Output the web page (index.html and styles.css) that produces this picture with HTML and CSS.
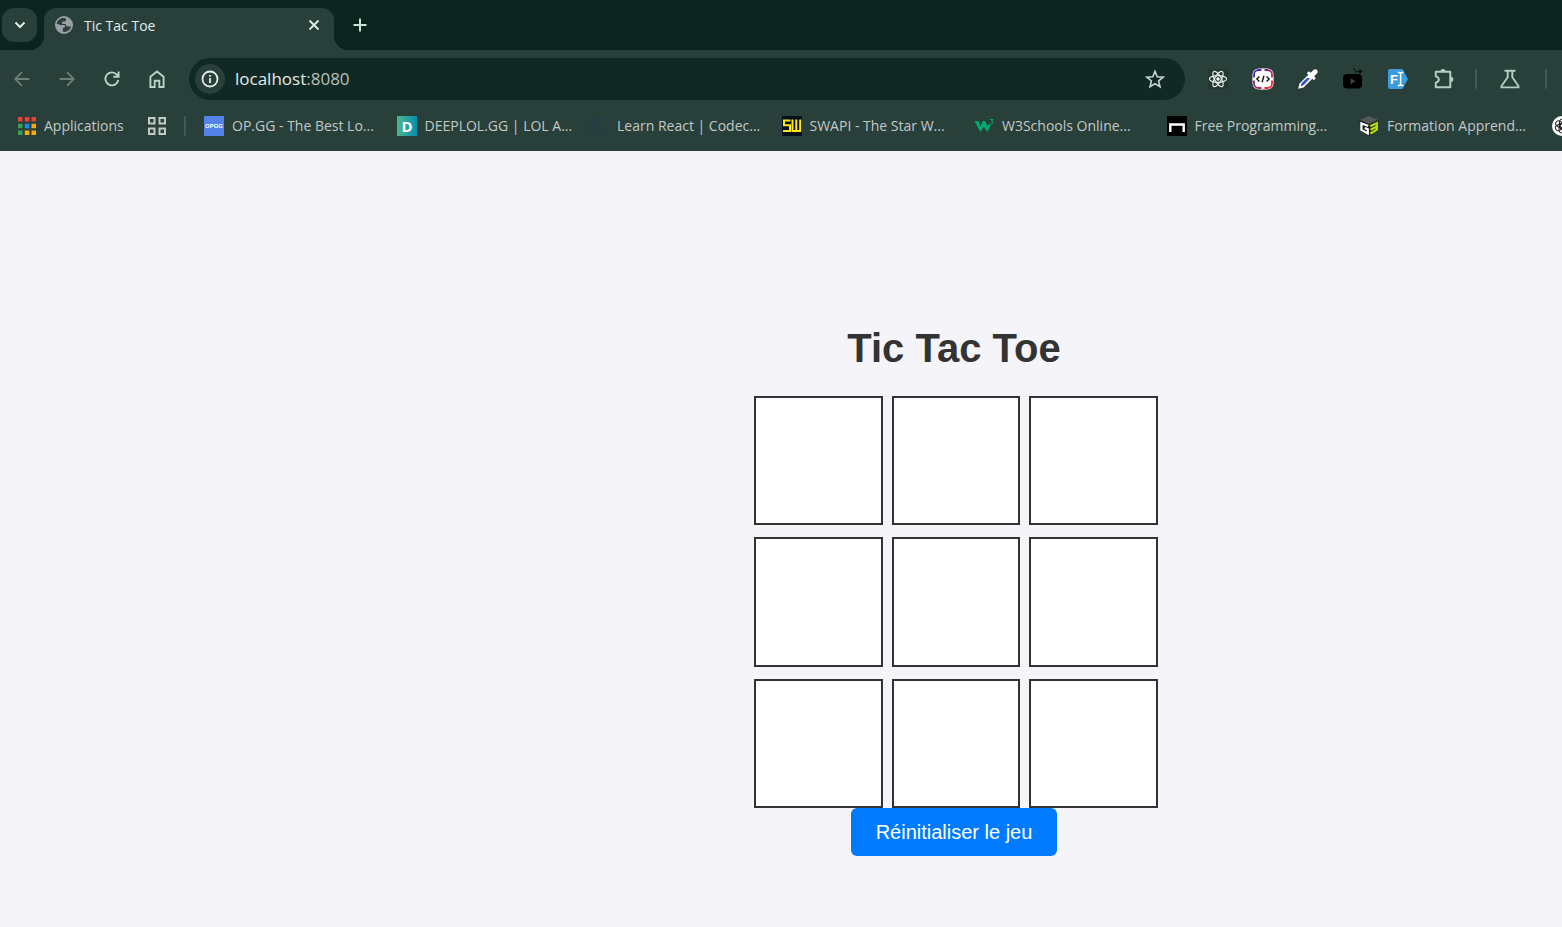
FILE: index.html
```html
<!DOCTYPE html>
<html lang="fr">
<head>
<meta charset="utf-8">
<title>Tic Tac Toe</title>
<link rel="stylesheet" href="styles.css">
</head>
<body>
<header class="browser">
  <div class="tabstrip">
    <button class="tab-search" aria-label="Rechercher des onglets">
      <svg width="12" height="12" viewBox="0 0 12 12"><path d="M1.5 3.5 6 8l4.500-4.500" fill="none" stroke="#e3ebe8" stroke-width="2"/></svg>
    </button>
    <div class="tab">
      <svg class="icon" width="20" height="20" viewBox="0 0 20 20"><circle cx="10" cy="10" r="9" fill="#9aa0a6"/><path d="M11.500 3.200C7 2.200 3.200 5 2.800 8.800l3.700 1.200h3.200c1.500 0 1.800 1.200 1.300 2.200l-2.200.8v3.800c4 .8 7.500-1.800 8.300-5.300h-3.300c-1.600 0-2-.8-2-2.400H8.200V6.400h2.500c.9 0 1.300-.8 1.300-1.700z" fill="#283f3a"/></svg>
      <span class="tab-title">Tic Tac Toe</span>
      <button class="tab-close" aria-label="Fermer">
        <svg width="12" height="12" viewBox="0 0 12 12"><path d="M1.500 1.500l9 9M10.500 1.500l-9 9" stroke="#e3ebe8" stroke-width="1.800"/></svg>
      </button>
    </div>
    <button class="new-tab" aria-label="Nouvel onglet">
      <svg width="14" height="14" viewBox="0 0 14 14"><path d="M7 .5v13M.5 7h13" stroke="#cbdfd8" stroke-width="2"/></svg>
    </button>
  </div>

  <div class="toolbar">
    <div class="nav">
      <button class="tool" aria-label="Retour"><svg width="20" height="20" viewBox="0 0 20 20"><path d="M17.500 10H3.500M10 3.200 3.200 10l6.800 6.800" fill="none" stroke="#6b7f79" stroke-width="1.800"/></svg></button>
      <button class="tool" aria-label="Avancer"><svg width="20" height="20" viewBox="0 0 20 20"><path d="M2.500 10h14M10 3.200l6.800 6.800-6.800 6.800" fill="none" stroke="#6b7f79" stroke-width="1.800"/></svg></button>
      <button class="tool" aria-label="Actualiser"><svg width="20" height="20" viewBox="0 0 20 20"><path d="M16.300 11a6.500 6.500 0 1 1-1.500-5.400L16.600 7.600M16.600 2.500v5.300h-5.300" fill="none" stroke="#b9d2ca" stroke-width="1.900"/></svg></button>
      <button class="tool" aria-label="Accueil"><svg width="20" height="20" viewBox="0 0 20 20"><path d="M3.400 18V7.800L10 2.500l6.600 5.300V18h-4.300v-6.200H7.700V18z" fill="none" stroke="#b9d2ca" stroke-width="1.900"/></svg></button>
    </div>
    <div class="omnibox">
      <button class="site-info" aria-label="Informations sur le site"><svg width="18" height="18" viewBox="0 0 18 18"><circle cx="9" cy="9" r="7.500" fill="none" stroke="#e3ebe8" stroke-width="1.800"/><path d="M9 8v5M9 5v1.800" stroke="#e3ebe8" stroke-width="1.800"/></svg></button>
      <label class="url"><span class="url-text">localhost<span class="port">:8080</span></span><input class="url-input" type="text" aria-label="Adresse"></label>
      <button class="star" aria-label="Ajouter aux favoris"><svg width="20" height="20" viewBox="0 0 20 20"><path d="M10 2.300l2.200 5.400 5.900.5-4.500 3.800 1.400 5.700-5-3.100-5 3.100L6.400 12 1.900 8.200l5.900-.5z" fill="none" stroke="#c7d6d1" stroke-width="1.600"/></svg></button>
    </div>
    <div class="extensions">
      <button class="tool" aria-label="React Developer Tools"><svg width="20" height="20" viewBox="0 0 20 20"><rect width="20" height="20" rx="2" fill="#243833"/><g fill="none" stroke="#e4e8e7" stroke-width="1.200"><ellipse cx="10" cy="10" rx="8.600" ry="3.300"/><ellipse cx="10" cy="10" rx="8.600" ry="3.300" transform="rotate(60 10 10)"/><ellipse cx="10" cy="10" rx="8.600" ry="3.300" transform="rotate(120 10 10)"/></g><circle cx="10" cy="10" r="1.700" fill="#fff"/></svg></button>
      <button class="tool" aria-label="Code"><svg width="22" height="22" viewBox="0 0 22 22"><defs><linearGradient id="ring" x1="0" y1="0" x2="1" y2="1"><stop offset="0" stop-color="#3b22d6"/><stop offset=".5" stop-color="#a3246e"/><stop offset="1" stop-color="#ff2b2b"/></linearGradient></defs><rect x=".5" y=".5" width="21" height="21" rx="6" fill="#fff"/><rect x="2" y="2" width="18" height="18" rx="4.500" fill="none" stroke="url(#ring)" stroke-width="1.800"/><path d="M9.500 2h3M9.500 20h3M2 9.500v3M20 9.500v3" stroke="#fff" stroke-width="2.500"/><path d="M7.400 8.500 4.900 11l2.500 2.500M14.600 8.500l2.500 2.500-2.500 2.500M12 7.800l-2 6.400" fill="none" stroke="#111" stroke-width="1.400"/></svg></button>
      <button class="tool" aria-label="Pipette"><svg width="22" height="22" viewBox="0 0 22 22"><path d="M1.200 20.800l1.300-5.300L11.300 6.700 9.800 5.200l2-2 1.900 1.500 3-3c1.200-1 2.600-.5 3.300.3.800.8 1.100 2.200.2 3.200l-3.100 3.100 1.700 1.900-2 2-1.500-1.500-8.800 8.800z" fill="#fff"/><path d="M3.600 18.400l1-3.300 5.400-5 3.300.2-6.500 6.600z" fill="#3155d0"/></svg></button>
      <button class="tool" aria-label="YouTube"><svg width="22" height="22" viewBox="0 0 22 22"><rect x="1" y="6" width="19" height="14.500" rx="4" fill="#000"/><path d="M8.500 10.200v6l5-3z" fill="#38463f"/><path d="M18 .500l.8 2.200 2.200.8-2.200.8-.8 2.200-.8-2.200-2.200-.8 2.200-.8zM11.500.800h1.500v1.500h-1.500zM13.500 3H15v1.500h-1.500z" fill="#000"/></svg></button>
      <button class="tool" aria-label="Fichier"><svg width="22" height="22" viewBox="0 0 22 22"><path d="M3 1h12.500L21 11l-5.500 10H3a2 2 0 0 1-2-2V3a2 2 0 0 1 2-2z" fill="#3d9be0"/><text x="3" y="16" class="glyph-f">F</text><path d="M10.800 4.300c1.500 0 2.500.5 2.800 1.200.3-.7 1.300-1.200 2.800-1.200M13.600 5.500v11M10.800 17.700c1.500 0 2.500-.5 2.800-1.200.3.700 1.300 1.200 2.800 1.200" fill="none" stroke="#fff" stroke-width="1.500"/></svg></button>
      <button class="tool" aria-label="Extensions"><svg width="22" height="22" viewBox="0 0 22 22"><path d="M3.800 3.800h14.500v15.400H3.800v-4.600c4-1 4-5.200 0-6.200z" fill="none" stroke="#b3cdc4" stroke-width="2" stroke-linejoin="round"/><path d="M8.400 3.500a2.600 2.600 0 0 1 5.200 0zM18.800 8.700a2.600 2.600 0 0 1 0 5.200z" fill="#b3cdc4"/></svg></button>
    </div>
    <span class="divider divider-ext"></span>
    <button class="tool" aria-label="Fonctionnalités expérimentales"><svg width="22" height="22" viewBox="0 0 22 22"><path d="M5.500 2.700h11M8.700 3v6.300L2.500 18v1.400h17V18l-6.200-8.700V3" fill="none" stroke="#b3cdc4" stroke-width="1.900" stroke-linejoin="round"/></svg></button>
    <span class="divider divider-end"></span>
  </div>

  <nav class="bookmarks" aria-label="Favoris">
    <a class="apps" href="#">
      <svg class="icon" width="18" height="18" viewBox="0 0 18 18"><path d="M0 0h4.500v4.500H0zM6.800 0h4.500v4.500H6.800zM13.500 0H18v4.500h-4.500z" fill="#ea4335"/><path d="M0 6.800h4.500v4.500H0zM0 13.500h4.500V18H0z" fill="#34a055"/><path d="M6.800 6.800h4.500v4.500H6.800z" fill="#1a88f0"/><path d="M13.500 6.800H18v4.500h-4.500zM13.500 13.500H18V18h-4.500zM6.800 13.500h4.500V18H6.800z" fill="#f9ab00"/></svg>
      <span>Applications</span>
    </a>
    <button class="tab-groups" aria-label="Groupes d'onglets"><svg width="18" height="18" viewBox="0 0 18 18"><path d="M1 1h5.500v5.500H1zM11.500 1H17v5.500h-5.500zM1 11.500h5.500V17H1zM11.500 11.500H17V17h-5.500z" fill="none" stroke="#c3c9c6" stroke-width="2"/></svg></button>
    <span class="divider divider-marks"></span>
    <div class="links">
      <a class="link" href="#"><svg class="icon" width="20" height="20" viewBox="0 0 20 20"><rect width="20" height="20" rx="1" fill="#5383e8"/><text x="10" y="12" class="glyph-op">OPGG</text></svg><span>OP.GG - The Best Lo...</span></a>
      <a class="link" href="#"><svg class="icon" width="20" height="20" viewBox="0 0 20 20"><defs><linearGradient id="teal"><stop offset="0" stop-color="#4db68c"/><stop offset="1" stop-color="#078eb0"/></linearGradient></defs><rect width="20" height="20" fill="url(#teal)"/><text x="10" y="15.500" class="glyph-d">D</text></svg><span>DEEPLOL.GG | LOL A...</span></a>
      <a class="link" href="#"><svg class="icon" width="20" height="20" viewBox="0 0 20 20"><path d="M.8 2h11.400v15.500H.8zM9 6.500H5.500v7H9M14 18h5" fill="none" stroke="#213f4e" stroke-width="1.500"/></svg><span>Learn React | Codec...</span></a>
      <a class="link" href="#"><svg class="icon" width="20" height="20" viewBox="0 0 20 20"><rect width="20" height="20" fill="#04101c"/><path d="M8.500 4.500H2v4.700h6V15H1M10.500 3.500V15h7.700V3.500M14.300 3.500V15" fill="none" stroke="#ffe81f" stroke-width="2"/></svg><span>SWAPI - The Star W...</span></a>
      <a class="link" href="#"><svg class="icon" width="20" height="20" viewBox="0 0 20 20"><path d="M.5 5h4l2 5 2.200-5h2.500l2.300 5 1.200-2 2 1.200-3.200 6.800-3.700-5-3.500 5z" fill="#04a86d"/><path d="M16 3.500h3L17.500 5.200c2 0 2 2.800-.2 2.800-.7 0-1.200-.3-1.500-.7" fill="none" stroke="#04a86d"/></svg><span>W3Schools Online...</span></a>
      <a class="link" href="#"><svg class="icon" width="20" height="20" viewBox="0 0 20 20"><rect width="20" height="20" fill="#000"/><path d="M3.300 16V8.500h13.400V16" fill="none" stroke="#fff" stroke-width="2.400"/></svg><span>Free Programming...</span></a>
      <a class="link" href="#"><svg class="icon" width="20" height="20" viewBox="0 0 20 20"><path d="M10 0l9.500 4-9.500 4L.5 4z" fill="#55585a"/><path d="M.500 4l9.500 4v12L1.500 15z" fill="#1d1f1f"/><path d="M19.500 4L10 8v12l8.500-5z" fill="#20250d"/><path d="M9.200 10 2.400 7.300v6.600l6.400 3.500v-4.200L5.800 12" fill="none" stroke="#fff" stroke-width="2.200"/><path d="M11.200 10.200 17.800 7.200v6.500l-6.400 3.700M11.500 13.800l6-3" fill="none" stroke="#b7dd12" stroke-width="2.300"/></svg><span>Formation Apprend...</span></a>
      <a class="link" href="#" aria-label="ChatGPT"><svg class="icon" width="20" height="20" viewBox="0 0 20 20"><circle cx="10" cy="10" r="10" fill="#fff"/><g fill="none" stroke="#222"><rect x="7.500" y="3" width="5.500" height="9" rx="2.700"/><rect x="7.500" y="3" width="5.500" height="9" rx="2.700" transform="rotate(60 10 10)"/><rect x="7.500" y="3" width="5.500" height="9" rx="2.700" transform="rotate(120 10 10)"/><rect x="7.500" y="3" width="5.500" height="9" rx="2.700" transform="rotate(180 10 10)"/><rect x="7.500" y="3" width="5.500" height="9" rx="2.700" transform="rotate(240 10 10)"/><rect x="7.500" y="3" width="5.500" height="9" rx="2.700" transform="rotate(300 10 10)"/></g></svg></a>
    </div>
  </nav>
</header>

<main class="page">
  <div class="game">
    <h1 class="title">Tic Tac Toe</h1>
    <div class="board">
      <button class="cell" aria-label="Case 1"></button>
      <button class="cell" aria-label="Case 2"></button>
      <button class="cell" aria-label="Case 3"></button>
      <button class="cell" aria-label="Case 4"></button>
      <button class="cell" aria-label="Case 5"></button>
      <button class="cell" aria-label="Case 6"></button>
      <button class="cell" aria-label="Case 7"></button>
      <button class="cell" aria-label="Case 8"></button>
      <button class="cell" aria-label="Case 9"></button>
    </div>
    <button class="reset">Réinitialiser le jeu</button>
  </div>
</main>
</body>
</html>
```
FILE: styles.css
```css
* { box-sizing: border-box; }

body {
  margin: 0;
  min-height: 100vh;
  display: flex;
  flex-direction: column;
  background: #f4f4f9;
  font-family: "Liberation Sans", Arial, sans-serif;
  overflow: hidden;
}

button {
  border: 0;
  padding: 0;
  background: none;
  font: inherit;
}

svg { display: block; }
.icon { flex: none; }

.browser {
  background: #283f3a;
  font-family: "Open Sans", "Segoe UI", sans-serif;
  font-size: 14px;
  color: #c3c9c6;
}

/* Tab strip */
.tabstrip {
  display: flex;
  height: 50px;
  padding: 8px 2px 0;
  background: #0b241e;
}

.tab-search {
  display: grid;
  place-items: center;
  width: 35px;
  height: 34px;
  border-radius: 12px;
  background: #283f3a;
}

.tab {
  position: relative;
  display: flex;
  align-items: center;
  width: 290px;
  margin-left: 7px;
  padding: 0 11px 8px 10px;
  gap: 10px;
  border-radius: 12px 12px 0 0;
  background: #283f3a;
}

.tab::before,
.tab::after {
  content: "";
  position: absolute;
  bottom: 0;
  width: 14px;
  height: 14px;
}

.tab::before {
  right: 100%;
  background: radial-gradient(circle at 0 0, transparent 14px, #283f3a 14px);
}

.tab::after {
  left: 100%;
  background: radial-gradient(circle at 100% 0, transparent 14px, #283f3a 14px);
}

.tab-title {
  flex: 1;
  color: #e3ebe8;
}

.tab-close {
  display: grid;
  place-items: center;
  width: 18px;
  height: 18px;
}

.new-tab {
  display: grid;
  place-items: center;
  width: 34px;
  height: 34px;
  margin-left: 9px;
}

/* Toolbar */
.toolbar {
  display: flex;
  align-items: center;
  height: 58px;
  padding-right: 15px;
}

.nav,
.extensions {
  display: flex;
  gap: 1px;
}

.extensions { margin-left: 11px; }

.tool {
  display: grid;
  place-items: center;
  flex: none;
  width: 44px;
  height: 34px;
}

.omnibox {
  display: flex;
  align-items: center;
  flex: 1;
  height: 42px;
  margin-left: 10px;
  padding: 0 20px 0 6px;
  border-radius: 21px;
  background: #112925;
}

.site-info {
  display: grid;
  place-items: center;
  width: 30px;
  height: 30px;
  border-radius: 50%;
  background: #283f3a;
}

.url {
  display: flex;
  flex: 1;
  margin-left: 10px;
  font-size: 17px;
  line-height: 24px;
}

.url-text { color: #e3ebe8; }
.port { color: #b4c1bd; }

.url-input {
  flex: 1;
  min-width: 0;
  padding: 0;
  border: 0;
  outline: 0;
  background: transparent;
  color: inherit;
  font: inherit;
}

.divider {
  flex: none;
  width: 2px;
  height: 20px;
  border-radius: 1px;
  background: #425a54;
}

.divider-ext { margin: 0 11px 0 10px; }
.divider-end { margin-left: 13px; }
.divider-marks { margin: 0 18px; }

/* Bookmarks bar */
.bookmarks {
  display: flex;
  align-items: center;
  height: 43px;
  padding: 0 0 8px 18px;
  overflow: hidden;
}

.apps,
.link {
  display: flex;
  align-items: center;
  color: inherit;
  text-decoration: none;
  white-space: nowrap;
}

.apps {
  gap: 8px;
  width: 108px;
}

.tab-groups {
  width: 18px;
  margin-left: 22px;
}

.link { gap: 8px; }

.links {
  display: grid;
  flex: none;
  grid-template-columns: repeat(8, minmax(0, 1fr));
  width: 1540px;
}

.apps,
.tab-groups,
.divider-marks {
  flex: none;
}

.glyph-f {
  fill: #fff;
  font: bold 13px "Liberation Sans", sans-serif;
}

.glyph-op {
  fill: #fff;
  font: bold 6px "Liberation Sans", sans-serif;
  text-anchor: middle;
}

.glyph-d {
  fill: #fff;
  font: bold 15px "Open Sans", sans-serif;
  text-anchor: middle;
}

/* Game */
.page {
  flex: 1;
  display: flex;
  justify-content: center;
  padding: 174px 0 71px 346px;
}

.game {
  display: flex;
  flex-direction: column;
  align-items: center;
  width: 400px;
}

.title {
  margin: 0 0 25px;
  font-size: 40px;
  line-height: 46px;
  color: #333;
}

.board {
  display: grid;
  align-self: flex-start;
  grid-template: repeat(3, 1fr) / repeat(3, 1fr);
  gap: 12px 9px;
  width: 404px;
  height: 412px;
}

.cell {
  border: 2px solid #333;
  background: #fff;
}

.reset {
  padding: 12px 25px;
  border-radius: 6px;
  background: #007bff;
  color: #fff;
  font-size: 20px;
  line-height: 24px;
}
```
